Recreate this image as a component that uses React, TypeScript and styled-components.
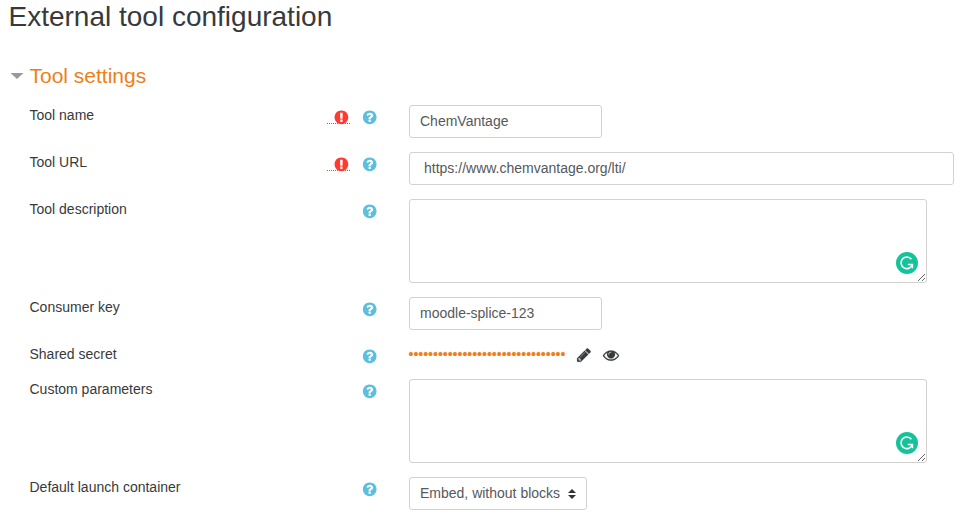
import React from "react";
import styled, { createGlobalStyle } from "styled-components";

const Global = createGlobalStyle`
  *, *::before, *::after { box-sizing: border-box; }
  body {
    margin: 0;
    background: #fff;
    color: #373a3c;
    font: 14px/21px "Liberation Sans", Arial, sans-serif;
    overflow: hidden;
  }
`;

const Page = styled.main`
  width: 972px;
  height: 527px;
  padding-left: 8.5px;
`;

const Title = styled.h2`
  margin: 0;
  height: 66px;
  font-size: 28px;
  line-height: 33px;
  font-weight: 400;
`;

const Legend = styled.h3`
  display: flex;
  align-items: center;
  gap: 6px;
  margin: -4px 0 0 2px;
  height: 27px;
  font-size: 21px;
  line-height: 25px;
  font-weight: 400;
  color: #ee7f18;
`;

const Caret = styled.span`
  width: 13px;
  height: 6px;
  margin-top: 1px;
  background: #999;
  clip-path: polygon(0 0, 100% 0, 50% 100%);
`;

const Form = styled.form`
  display: flex;
  flex-direction: column;
  gap: 14px;
  margin-top: 16px;
  padding-left: 21px;
`;

const Row = styled.div`
  display: grid;
  grid-template-columns: 297.5px 82px 1fr;
  align-items: start;
`;

const Label = styled.label`
  line-height: 21px;
`;

const Marks = styled.span`
  display: flex;
  justify-content: flex-end;
  height: 21px;
  padding: 5px 32px 0 0;
`;

const Required = styled.abbr`
  display: flex;
  justify-content: flex-end;
  width: 23px;
  height: 14px;
  padding-right: 1px;
  margin-right: 12px;
  border-bottom: 1px dotted #777;
  color: #ff3b30;
`;

const Help = styled.span`
  display: flex;
  width: 15px;
  color: #5bc0de;
`;

const Glyph = styled.svg`
  display: block;
  flex: none;
  fill: currentColor;
  overflow: visible;
`;

const TextInput = styled.input<{ $wide?: boolean }>`
  display: block;
  width: ${(p) => (p.$wide ? 545 : 193)}px;
  height: 33px;
  padding: 0 10px 1px ${(p) => (p.$wide ? 14 : 10)}px;
  border: 1px solid #d2d2d2;
  border-radius: 3px;
  background: #fff;
  font: inherit;
  color: #55595c;
  outline: 0;
`;

const AreaWrap = styled.div`
  position: relative;
  width: 518px;
  height: 84px;
`;

const Area = styled.textarea`
  display: block;
  width: 100%;
  height: 100%;
  border: 1px solid #d2d2d2;
  border-radius: 3px;
  background: #fff;
  font: inherit;
  outline: 0;
`;

const Badge = styled.svg`
  position: absolute;
  right: 9px;
  bottom: 9px;
  width: 22px;
  height: 22px;
`;

const Secret = styled.div`
  display: flex;
  height: 21px;
  color: #373a3c;
`;

const Dots = styled.span`
  width: 167.5px;
  margin-left: -0.5px;
  color: #ee7f18;
  -webkit-text-stroke: 0.2px #ee7f18;
`;

const SecretActions = styled.span`
  display: flex;
  gap: 11px;
  padding-top: 3px;
`;

const Select = styled.button`
  display: flex;
  align-items: center;
  justify-content: space-between;
  width: 178px;
  height: 33px;
  padding: 0 10px 1px;
  border: 1px solid #d2d2d2;
  border-radius: 3px;
  background: #fff;
  font: inherit;
  color: #55595c;
  white-space: nowrap;
`;

const SelectArrows = styled.svg`
  width: 8px;
  height: 10px;
  margin-top: 1px;
  fill: #333;
`;

const paths = {
  help: "M1024 1376v-192q0-14-9-23t-23-9h-192q-14 0-23 9t-9 23v192q0 14 9 23t23 9h192q14 0 23-9t9-23zm256-672q0-88-55.5-163t-138.5-116-170-41q-243 0-371 213-15 24 8 42l132 100q7 6 19 6 16 0 25-12 53-68 86-92 34-24 86-24 48 0 85.5 26t37.5 59q0 38-20 61t-68 45q-63 28-115.5 86.5t-52.5 125.5v36q0 14 9 23t23 9h192q14 0 23-9t9-23q0-19 21.5-49.5t54.5-49.5q32-18 49-28.5t46-35 44.5-48 28-60.5 12.5-81zm384 192q0 209-103 385.5t-279.5 279.5-385.5 103-385.5-103-279.5-279.5-103-385.5 103-385.5 279.5-279.5 385.5-103 385.5 103 279.5 279.5 103 385.5z",
  required: "M896 128q209 0 385.5 103t279.5 279.5 103 385.5-103 385.5-279.5 279.5-385.5 103-385.5-103-279.5-279.5-103-385.5 103-385.5 279.5-279.5 385.5-103zm128 1247v-190q0-14-9-23.5t-22-9.5h-192q-13 0-23 10t-10 23v190q0 13 10 23t23 10h192q13 0 22-9.5t9-23.5zm-2-344l18-621q0-12-10-18-10-8-24-8h-220q-14 0-24 8-10 6-10 18l17 621q0 10 10 17.5t24 7.5h185q14 0 23.5-7.5t10.5-17.5z",
  pencil: "M491 1536l91-91-235-235-91 91v107h128v128h107zm523-928q0-22-22-22-10 0-17 7l-542 542q-7 7-7 17 0 22 22 22 10 0 17-7l542-542q7-7 7-17zm-54-192l416 416-832 832h-416v-416zm683 96q0 53-37 90l-166 166-416-416 166-165q36-38 90-38 53 0 91 38l235 234q37 39 37 91z",
  eye: "M1664 960q-152-236-381-353 61 104 61 225 0 185-131.5 316.5t-316.5 131.5-316.5-131.5-131.5-316.5q0-121 61-225-229 117-381 353 133 205 333.5 326.5t434.5 121.5 434.5-121.5 333.5-326.5zm-720-384q0-20-14-34t-34-14q-125 0-214.5 89.5t-89.5 214.5q0 20 14 34t34 14 34-14 14-34q0-86 61-147t147-61q20 0 34-14t14-34zm848 384q0 34-20 69-140 230-376.5 368.5t-499.5 138.5-499.5-139-376.5-368q-20-35-20-69t20-69q140-229 376.5-368t499.5-139 499.5 139 376.5 368q20 35 20 69z",
};

const roundViewBox = {
  help: "34 78 1680 1680",
  required: "67 78 1680 1680",
};

const RoundIcon = ({ name }: { name: "help" | "required" }) => (
  <Glyph width="15" height="15" viewBox={roundViewBox[name]}>
    <path d={paths[name]} />
  </Glyph>
);

const ActionIcon = ({ name }: { name: "pencil" | "eye" }) => (
  <Glyph width="16" height="16" viewBox="0 0 1792 1792" stroke="currentColor" strokeWidth="25">
    <path d={paths[name]} />
  </Glyph>
);

const WritingArea = ({ id }: { id: string }) => (
  <AreaWrap>
    <Area id={id} />
    <Badge viewBox="0 0 22 22">
      <circle cx="11" cy="11" r="11" fill="#15c39a" />
      <path
        d="M15.4 7.2A5.8 5.8 0 1 0 16.4 12.6M11.8 12.5H16.4V16.2"
        fill="none"
        stroke="#fff"
        strokeWidth="1.6"
      />
    </Badge>
  </AreaWrap>
);

type FieldProps = {
  id: string;
  label: string;
  required?: boolean;
  children: React.ReactNode;
};

const Field = ({ id, label, required, children }: FieldProps) => (
  <Row>
    <Label htmlFor={id}>{label}</Label>
    <Marks>
      {required && (
        <Required title="Required">
          <RoundIcon name="required" />
        </Required>
      )}
      <Help>
        <RoundIcon name="help" />
      </Help>
    </Marks>
    {children}
  </Row>
);

export default function App() {
  return (
    <Page>
      <Global />
      <Title>External tool configuration</Title>
      <Legend>
        <Caret />
        Tool settings
      </Legend>
      <Form>
        <Field id="name" label="Tool name" required>
          <TextInput id="name" defaultValue="ChemVantage" />
        </Field>
        <Field id="url" label="Tool URL" required>
          <TextInput id="url" $wide defaultValue="https://www.chemvantage.org/lti/" />
        </Field>
        <Field id="description" label="Tool description">
          <WritingArea id="description" />
        </Field>
        <Field id="key" label="Consumer key">
          <TextInput id="key" defaultValue="moodle-splice-123" />
        </Field>
        <Field id="secret" label="Shared secret">
          <Secret id="secret">
            <Dots>{"•".repeat(32)}</Dots>
            <SecretActions>
              <ActionIcon name="pencil" />
              <ActionIcon name="eye" />
            </SecretActions>
          </Secret>
        </Field>
        <Field id="custom" label="Custom parameters">
          <WritingArea id="custom" />
        </Field>
        <Field id="container" label="Default launch container">
          <Select id="container" type="button">
            Embed, without blocks
            <SelectArrows viewBox="0 0 8 10">
              <path d="M0 4L4 0L8 4ZM0 6H8L4 10Z" />
            </SelectArrows>
          </Select>
        </Field>
      </Form>
    </Page>
  );
}
